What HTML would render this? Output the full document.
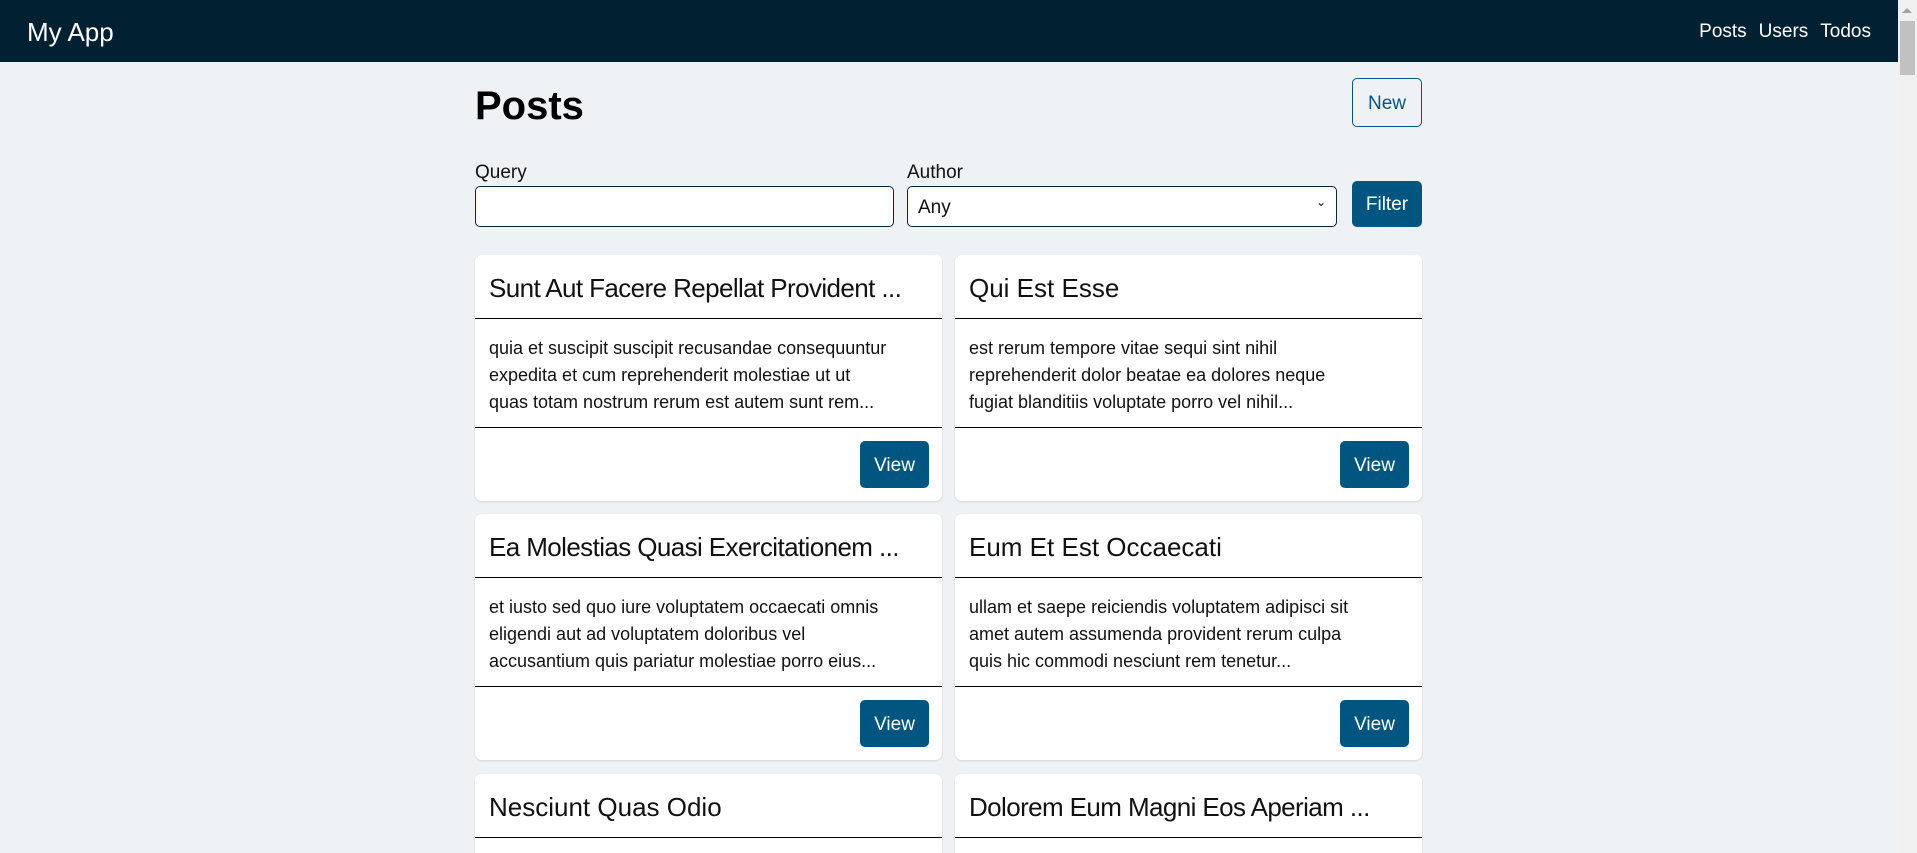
<!DOCTYPE html>
<html style="height:853px;overflow:hidden"><head><meta charset="utf-8"><style>
*{box-sizing:border-box;margin:0;padding:0}
body{width:1917px;height:853px;overflow:hidden;background:#eef2f5;font-family:"Liberation Sans",sans-serif;color:#111;position:relative}
.nav{position:absolute;left:0;top:0;width:1898px;height:62px;background:#012133;color:#fff}
.brand{position:absolute;left:27px;top:17px;font-size:26px}
.links{position:absolute;right:27px;top:21px;font-size:19px}
.links span{margin-left:12px}
.sb{position:absolute;left:1898px;top:0;width:19px;height:853px;background:#f0f0f0}
.sb .th{position:absolute;left:2px;top:21px;width:15px;height:54px;background:#c1c1c1}
.sb .ar{position:absolute;left:4px;top:8px;width:0;height:0;border-left:5px solid transparent;border-right:5px solid transparent;border-bottom:5px solid #a3a3a3}
.abs{position:absolute}
h1{position:absolute;left:475px;top:84px;font-size:40px;font-weight:bold;color:#000}
.new{left:1352px;top:78px;width:70px;height:49px;border:1px solid #005581;border-radius:5px;color:#005581;font-size:19px;text-align:center;line-height:49px}
.lbl{font-size:19px;top:162px}
.inp{top:186px;height:41px;border:1px solid #0d2637;border-radius:5px;background:#fff}
.filter{left:1352px;top:181px;width:70px;height:46px;background:#005581;color:#fff;border-radius:5px;font-size:19px;text-align:center;line-height:48px}
.card{position:absolute;width:467px;height:246px;background:#fff;border-radius:7px;box-shadow:0 1px 2px rgba(0,0,0,.12);overflow:hidden}
.ch{height:64px;border-bottom:1.5px solid #000;padding:18px 14px 0;font-size:26px;white-space:nowrap;overflow:hidden}
.cb{height:109px;border-bottom:1.5px solid #000;padding:16px 14px 0;font-size:18px;line-height:27px;white-space:nowrap;overflow:hidden}
.view{position:absolute;right:13px;bottom:13px;width:69px;height:47px;background:#005581;color:#fff;border-radius:5px;font-size:19px;text-align:center;line-height:49px}
</style></head><body>
<div class="nav"><div class="brand">My App</div><div class="links"><span>Posts</span><span>Users</span><span>Todos</span></div></div>
<div class="sb"><div class="ar"></div><div class="th"></div></div>
<h1>Posts</h1>
<div class="abs new">New</div>
<div class="abs lbl" style="left:475px">Query</div>
<div class="abs lbl" style="left:907px">Author</div>
<div class="abs inp" style="left:475px;width:419px"></div>
<div class="abs inp" style="left:907px;width:430px;font-size:19px;padding:10px 0 0 10px">Any<span style="position:absolute;right:10px;top:8px;font-size:12px">&#8964;</span></div>
<div class="abs filter">Filter</div>

<div class="card" style="left:475px;top:255px"><div class="ch" style="letter-spacing:-0.6px">Sunt Aut Facere Repellat Provident ...</div><div class="cb">quia et suscipit suscipit recusandae consequuntur<br>expedita et cum reprehenderit molestiae ut ut<br>quas totam nostrum rerum est autem sunt rem...</div><div class="view">View</div></div>
<div class="card" style="left:955px;top:255px"><div class="ch">Qui Est Esse</div><div class="cb">est rerum tempore vitae sequi sint nihil<br>reprehenderit dolor beatae ea dolores neque<br>fugiat blanditiis voluptate porro vel nihil...</div><div class="view">View</div></div>
<div class="card" style="left:475px;top:514px"><div class="ch" style="letter-spacing:-0.6px">Ea Molestias Quasi Exercitationem ...</div><div class="cb">et iusto sed quo iure voluptatem occaecati omnis<br>eligendi aut ad voluptatem doloribus vel<br>accusantium quis pariatur molestiae porro eius...</div><div class="view">View</div></div>
<div class="card" style="left:955px;top:514px"><div class="ch">Eum Et Est Occaecati</div><div class="cb">ullam et saepe reiciendis voluptatem adipisci sit<br>amet autem assumenda provident rerum culpa<br>quis hic commodi nesciunt rem tenetur...</div><div class="view">View</div></div>
<div class="card" style="left:475px;top:774px;height:79px;border-radius:7px 7px 0 0"><div class="ch">Nesciunt Quas Odio</div></div>
<div class="card" style="left:955px;top:774px;height:79px;border-radius:7px 7px 0 0"><div class="ch" style="letter-spacing:-0.6px">Dolorem Eum Magni Eos Aperiam ...</div></div>
</body></html>
